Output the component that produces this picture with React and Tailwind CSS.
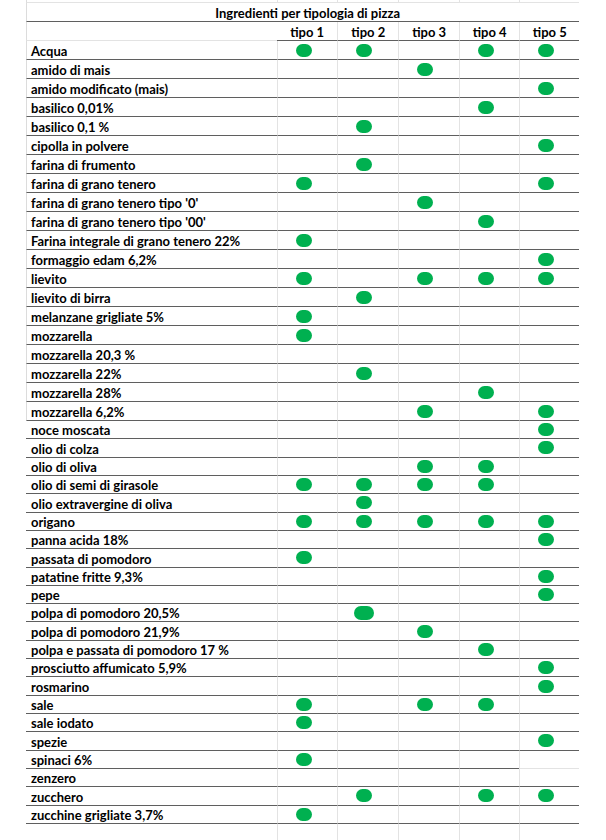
const GRID = "grid grid-cols-[251px_60.3px_61px_60.7px_60.3px_60px]";

const rows = [
  ["Acqua", [1, 2, 4, 5]],
  ["amido di mais", [3]],
  ["amido modificato (mais)", [5]],
  ["basilico 0,01%", [4]],
  ["basilico 0,1 %", [2]],
  ["cipolla in polvere", [5]],
  ["farina di frumento", [2]],
  ["farina di grano tenero", [1, 5]],
  ["farina di grano tenero tipo '0'", [3]],
  ["farina di grano tenero tipo '00'", [4]],
  ["Farina integrale di grano tenero 22%", [1]],
  ["formaggio edam 6,2%", [5]],
  ["lievito", [1, 3, 4, 5]],
  ["lievito di birra", [2]],
  ["melanzane grigliate 5%", [1]],
  ["mozzarella", [1]],
  ["mozzarella 20,3 %", []],
  ["mozzarella 22%", [2]],
  ["mozzarella 28%", [4]],
  ["mozzarella 6,2%", [3, 5]],
  ["noce moscata", [5]],
  ["olio di colza", [5]],
  ["olio di oliva", [3, 4]],
  ["olio di semi di girasole", [1, 2, 3, 4]],
  ["olio extravergine di oliva", [2]],
  ["origano", [1, 2, 3, 4, 5]],
  ["panna acida 18%", [5]],
  ["passata di pomodoro", [1]],
  ["patatine fritte 9,3%", [5]],
  ["pepe", [5]],
  ["polpa di pomodoro 20,5%", [2]],
  ["polpa di pomodoro 21,9%", [3]],
  ["polpa e passata di pomodoro 17 %", [4]],
  ["prosciutto affumicato 5,9%", [5]],
  ["rosmarino", [5]],
  ["sale", [1, 3, 4]],
  ["sale iodato", [1]],
  ["spezie", [5]],
  ["spinaci 6%", [1]],
  ["zenzero", []],
  ["zucchero", [2, 4, 5]],
  ["zucchine grigliate 3,7%", [1]],
];

function Dot({ wide }) {
  return (
    <span
      className={
        wide
          ? "block w-[20px] h-[14px] rounded-full bg-[#00b050]"
          : "block w-[16px] h-[13px] rounded-full bg-[#00b050]"
      }
    />
  );
}

function DataRow({ index, label, marks }) {
  // the first 20 rows are a bit taller and still carry the left gridline
  const upper = index < 20;
  const spinaci = label === "spinaci 6%";

  return (
    <div className={`${GRID} ${upper ? "h-[19px]" : "h-[18.32px]"}`}>
      <div
        className={`border-b border-b-[#5f5f5f] pl-[4px] pb-[1px] flex items-end text-[13px] leading-[14px] font-bold text-black whitespace-nowrap ${
          upper ? "border-l border-l-[#dcdcdc]" : "pl-[5px]"
        }`}
      >
        {label}
      </div>
      {[1, 2, 3, 4, 5].map((c) => (
        <div
          key={c}
          className={`border-l border-l-[#e3e3e3] border-b flex items-center justify-center pr-[8px] ${
            spinaci && c === 5 ? "border-b-[#e3e3e3]" : "border-b-[#5f5f5f]"
          }`}
        >
          {marks.includes(c) && <Dot wide={label === "polpa di pomodoro 20,5%" && c === 2} />}
        </div>
      ))}
    </div>
  );
}

export default function App() {
  return (
    <div className="w-[606px] h-[840px] bg-white overflow-hidden font-['Lato','Liberation_Sans',sans-serif]">
      <div className="ml-[26px] w-[553.3px]">
        {/* strip of the row above */}
        <div className={`${GRID} h-[3px]`}>
          <div className="border-l border-l-[#dcdcdc] border-b border-b-[#e3e3e3]" />
          {[1, 2, 3, 4, 5].map((c) => (
            <div key={c} className="border-l border-l-[#e3e3e3] border-b border-b-[#e3e3e3]" />
          ))}
        </div>

        {/* title */}
        <div className="h-[19px] border-l border-l-[#dcdcdc] border-b border-b-[#5f5f5f] flex items-end justify-center pl-[9px] pb-[1px] text-[13px] leading-[14px] font-bold text-black">
          Ingredienti per tipologia di pizza
        </div>

        {/* header */}
        <div className={`${GRID} h-[19px]`}>
          <div className="border-l border-l-[#dcdcdc] border-b border-b-[#e3e3e3]" />
          {[1, 2, 3, 4, 5].map((c) => (
            <div
              key={c}
              className={`border-b border-b-[#5f5f5f] flex items-end justify-center pb-[1px] text-[13px] leading-[14px] font-bold text-black ${
                c > 1 ? "border-l border-l-[#e3e3e3]" : ""
              }`}
            >
              tipo {c}
            </div>
          ))}
        </div>

        {rows.map(([label, marks], i) => (
          <DataRow key={label} index={i} label={label} marks={marks} />
        ))}

        {/* empty space under the table */}
        <div className={`${GRID} h-[20px]`}>
          <div />
          {[1, 2, 3, 4, 5].map((c) => (
            <div key={c} className="border-l border-l-[#e3e3e3]" />
          ))}
        </div>
      </div>
    </div>
  );
}
